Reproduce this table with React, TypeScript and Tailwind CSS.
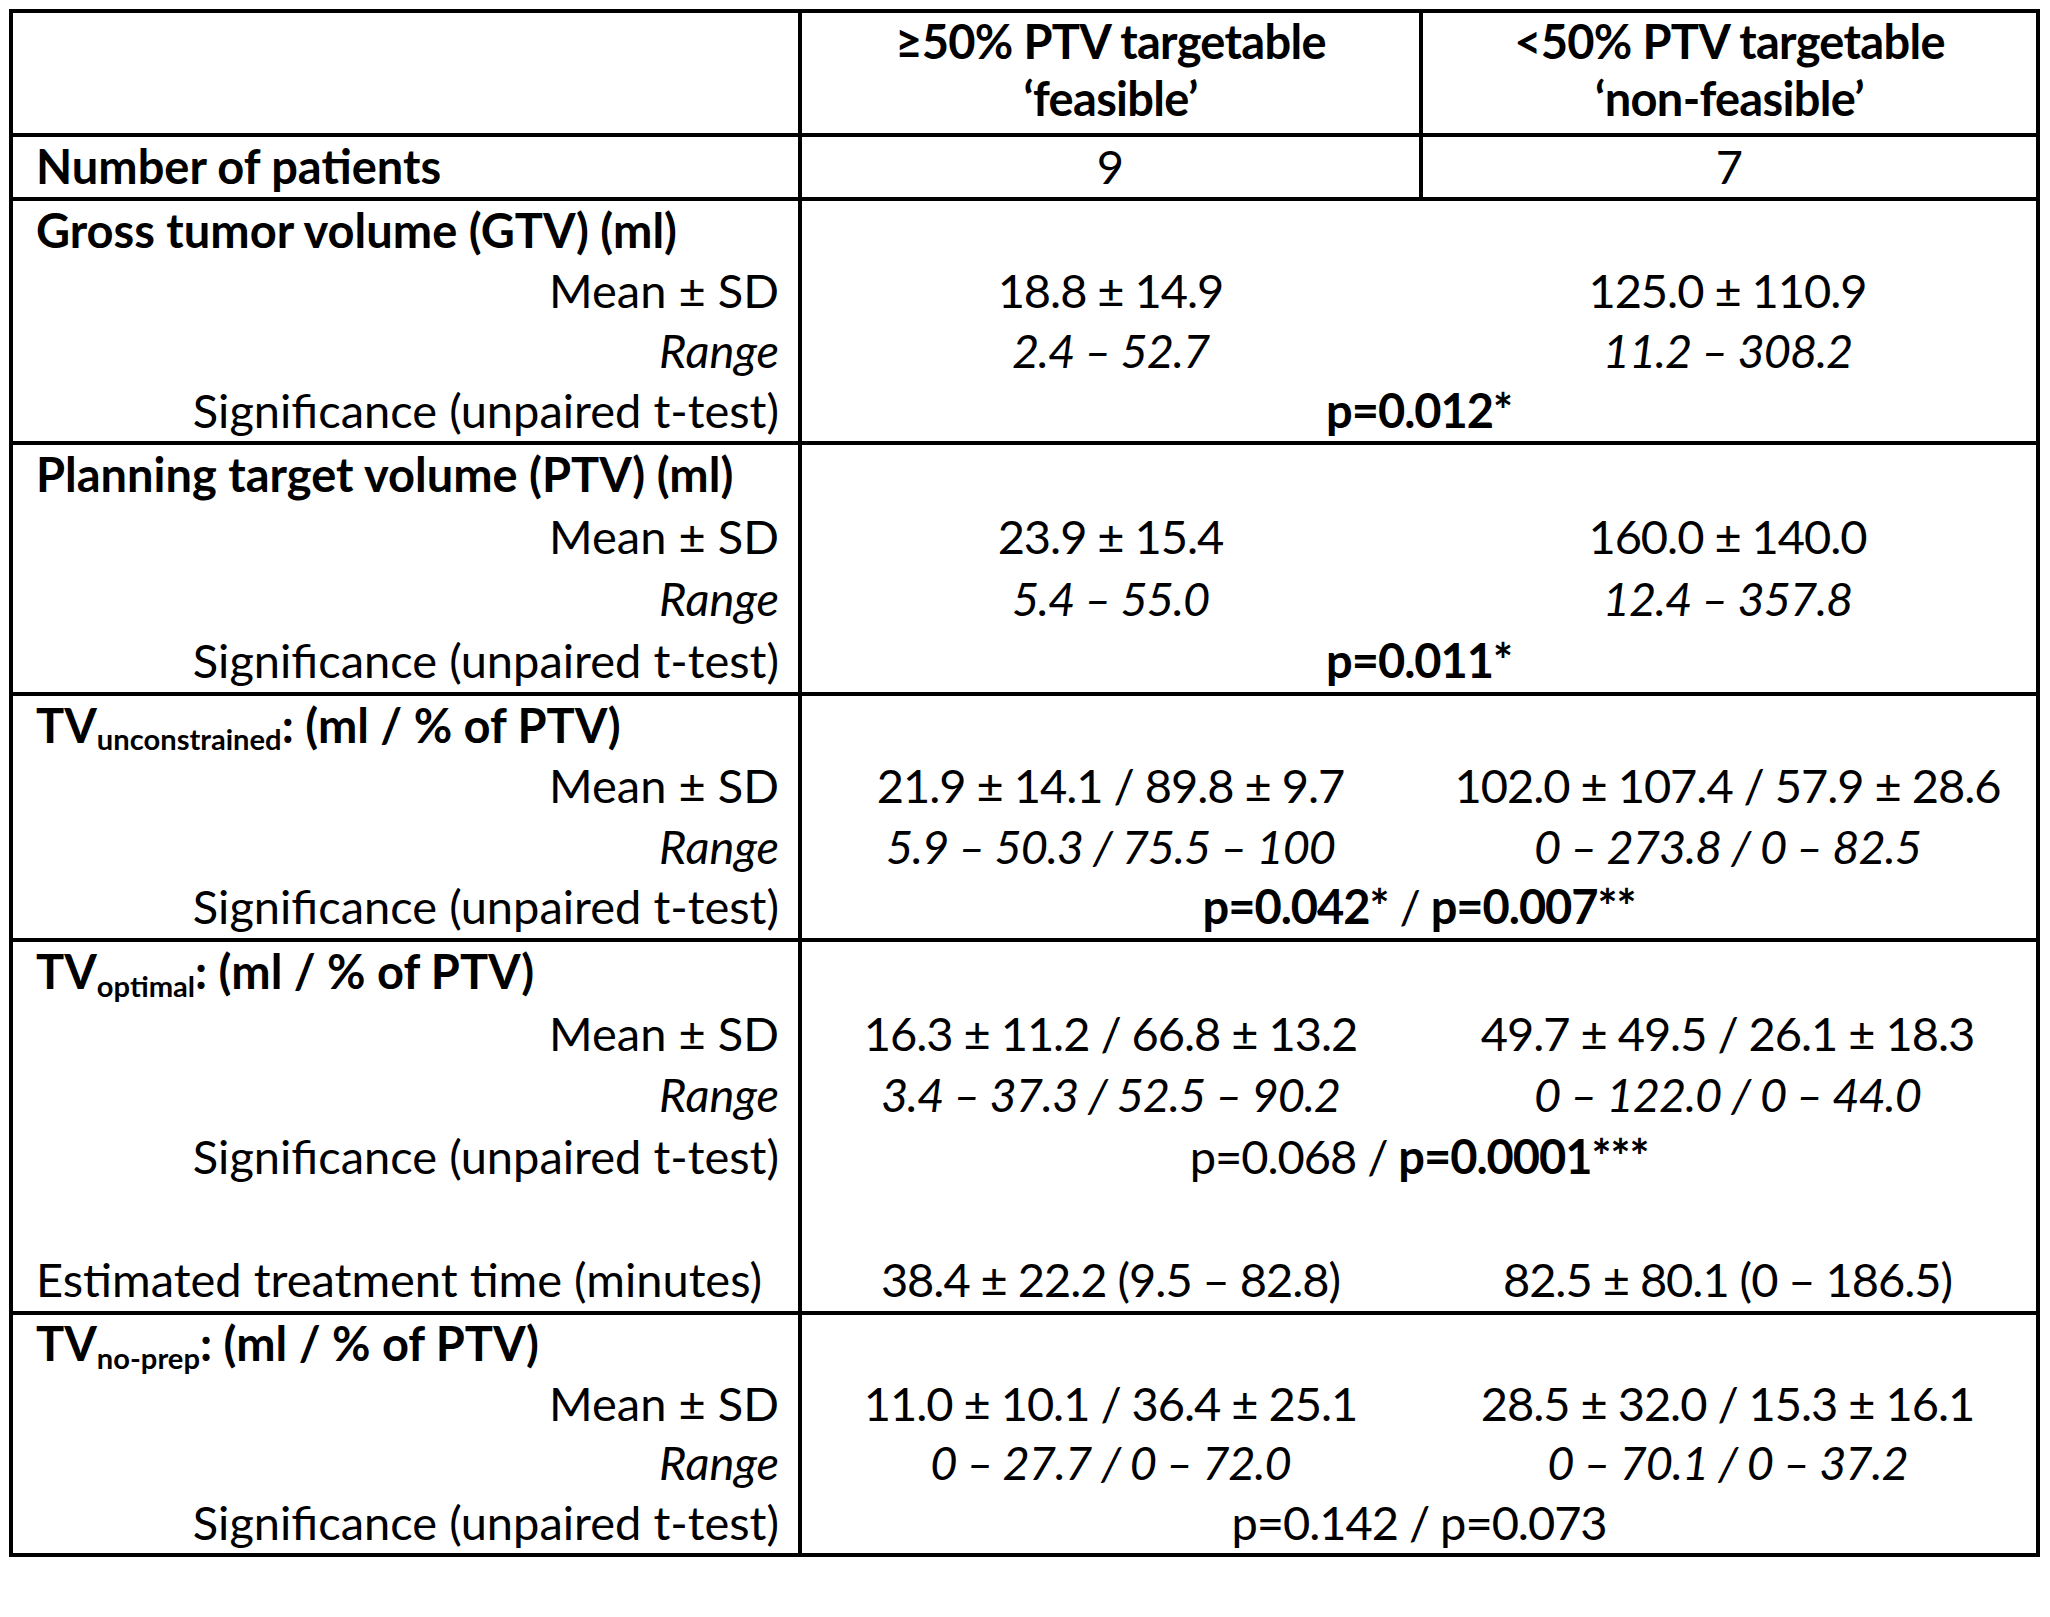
import type { ReactNode } from 'react';

type Line = {
  label: ReactNode;
  labelAlign?: 'left' | 'right';
  italic?: boolean;
  left?: ReactNode;
  right?: ReactNode;
  span?: ReactNode;
};

interface Section {
  lineHeight: string;
  lines: Line[];
}

function Title({ base, sub, rest }: { base: string; sub?: string; rest: string }) {
  return (
    <span className="font-bold">
      {base}
      {sub ? <sub className="text-[0.62em] leading-none">{sub}</sub> : null}
      {rest}
    </span>
  );
}

const SECTIONS: Section[] = [
  {
    lineHeight: 'h-[60px]',
    lines: [
      { label: <span className="font-bold">Gross tumor volume (GTV) (ml)</span>, labelAlign: 'left' },
      { label: 'Mean ± SD', left: '18.8 ± 14.9', right: '125.0 ± 110.9' },
      { label: 'Range', italic: true, left: '2.4 – 52.7', right: '11.2 – 308.2' },
      { label: 'Significance (unpaired t-test)', span: <span className="font-bold">p=0.012*</span> },
    ],
  },
  {
    lineHeight: 'h-[61.75px]',
    lines: [
      { label: <span className="font-bold">Planning target volume (PTV) (ml)</span>, labelAlign: 'left' },
      { label: 'Mean ± SD', left: '23.9 ± 15.4', right: '160.0 ± 140.0' },
      { label: 'Range', italic: true, left: '5.4 – 55.0', right: '12.4 – 357.8' },
      { label: 'Significance (unpaired t-test)', span: <span className="font-bold">p=0.011*</span> },
    ],
  },
  {
    lineHeight: 'h-[60.5px]',
    lines: [
      { label: <Title base="TV" sub="unconstrained" rest=": (ml / % of PTV)" />, labelAlign: 'left' },
      { label: 'Mean ± SD', left: '21.9 ± 14.1 / 89.8 ± 9.7', right: '102.0 ± 107.4 / 57.9 ± 28.6' },
      { label: 'Range', italic: true, left: '5.9 – 50.3 / 75.5 – 100', right: '0 – 273.8 / 0 – 82.5' },
      {
        label: 'Significance (unpaired t-test)',
        span: (
          <span>
            <span className="font-bold">p=0.042*</span> / <span className="font-bold">p=0.007**</span>
          </span>
        ),
      },
    ],
  },
  {
    lineHeight: 'h-[61.5px]',
    lines: [
      { label: <Title base="TV" sub="optimal" rest=": (ml / % of PTV)" />, labelAlign: 'left' },
      { label: 'Mean ± SD', left: '16.3 ± 11.2 / 66.8 ± 13.2', right: '49.7 ± 49.5 / 26.1 ± 18.3' },
      { label: 'Range', italic: true, left: '3.4 – 37.3 / 52.5 – 90.2', right: '0 – 122.0 / 0 – 44.0' },
      {
        label: 'Significance (unpaired t-test)',
        span: (
          <span>
            p=0.068 / <span className="font-bold">p=0.0001***</span>
          </span>
        ),
      },
      { label: '' },
      {
        label: 'Estimated treatment time (minutes)',
        labelAlign: 'left',
        left: '38.4 ± 22.2 (9.5 – 82.8)',
        right: '82.5 ± 80.1 (0 – 186.5)',
      },
    ],
  },
  {
    lineHeight: 'h-[59.5px]',
    lines: [
      { label: <Title base="TV" sub="no-prep" rest=": (ml / % of PTV)" />, labelAlign: 'left' },
      { label: 'Mean ± SD', left: '11.0 ± 10.1 / 36.4 ± 25.1', right: '28.5 ± 32.0 / 15.3 ± 16.1' },
      { label: 'Range', italic: true, left: '0 – 27.7 / 0 – 72.0', right: '0 – 70.1 / 0 – 37.2' },
      { label: 'Significance (unpaired t-test)', span: 'p=0.142 / p=0.073' },
    ],
  },
];

function GroupSection({ section }: { section: Section }) {
  return (
    <div className="flex border-t-4 border-black">
      <div className="w-[789px] shrink-0 border-r-4 border-black">
        {section.lines.map((line, i) => (
          <div
            key={i}
            className={`flex items-center whitespace-nowrap pb-[2px] ${section.lineHeight} ${
              line.labelAlign === 'left' ? 'justify-start pl-[23px]' : 'justify-end pr-[19px]'
            } ${line.italic ? 'italic' : ''}`}
          >
            {line.label}
          </div>
        ))}
      </div>
      <div className="flex-1 tracking-[-0.022em]">
        {section.lines.map((line, i) =>
          line.span ? (
            <div key={i} className={`flex items-center justify-center whitespace-nowrap pb-[2px] ${section.lineHeight}`}>
              {line.span}
            </div>
          ) : (
            <div
              key={i}
              className={`grid grid-cols-[617px_1fr] items-center whitespace-nowrap pb-[2px] ${section.lineHeight} ${
                line.italic ? 'italic' : ''
              }`}
            >
              <div className="text-center">{line.left}</div>
              <div className="text-center">{line.right}</div>
            </div>
          ),
        )}
      </div>
    </div>
  );
}

export default function App() {
  return (
    <div className="min-h-[1617px] w-[2050px] bg-white pl-[9px] pt-[9px] text-[47px] leading-none text-black [font-family:Lato,'Noto_Sans',sans-serif]">
      <div className="w-[2031px] border-4 border-black">
        <div className="flex">
          <div className="h-[120px] w-[789px] shrink-0 border-r-4 border-black" />
          <div className="flex h-[120px] w-[621px] shrink-0 flex-col items-center justify-center border-r-4 border-black pb-[6px] font-bold tracking-[-0.015em]">
            <div className="flex h-[58px] items-center">≥50% PTV targetable</div>
            <div className="flex h-[58px] items-center">‘feasible’</div>
          </div>
          <div className="flex h-[120px] flex-1 flex-col items-center justify-center pb-[6px] font-bold tracking-[-0.015em]">
            <div className="flex h-[58px] items-center">&lt;50% PTV targetable</div>
            <div className="flex h-[58px] items-center">‘non-feasible’</div>
          </div>
        </div>
        <div className="flex border-t-4 border-black">
          <div className="flex h-[60px] w-[789px] shrink-0 items-center border-r-4 border-black pb-[2px] pl-[23px] font-bold">
            Number of patients
          </div>
          <div className="flex h-[60px] w-[621px] shrink-0 items-center justify-center border-r-4 border-black pb-[2px]">
            9
          </div>
          <div className="flex h-[60px] flex-1 items-center justify-center pb-[2px]">7</div>
        </div>
        {SECTIONS.map((section, i) => (
          <GroupSection key={i} section={section} />
        ))}
      </div>
    </div>
  );
}
